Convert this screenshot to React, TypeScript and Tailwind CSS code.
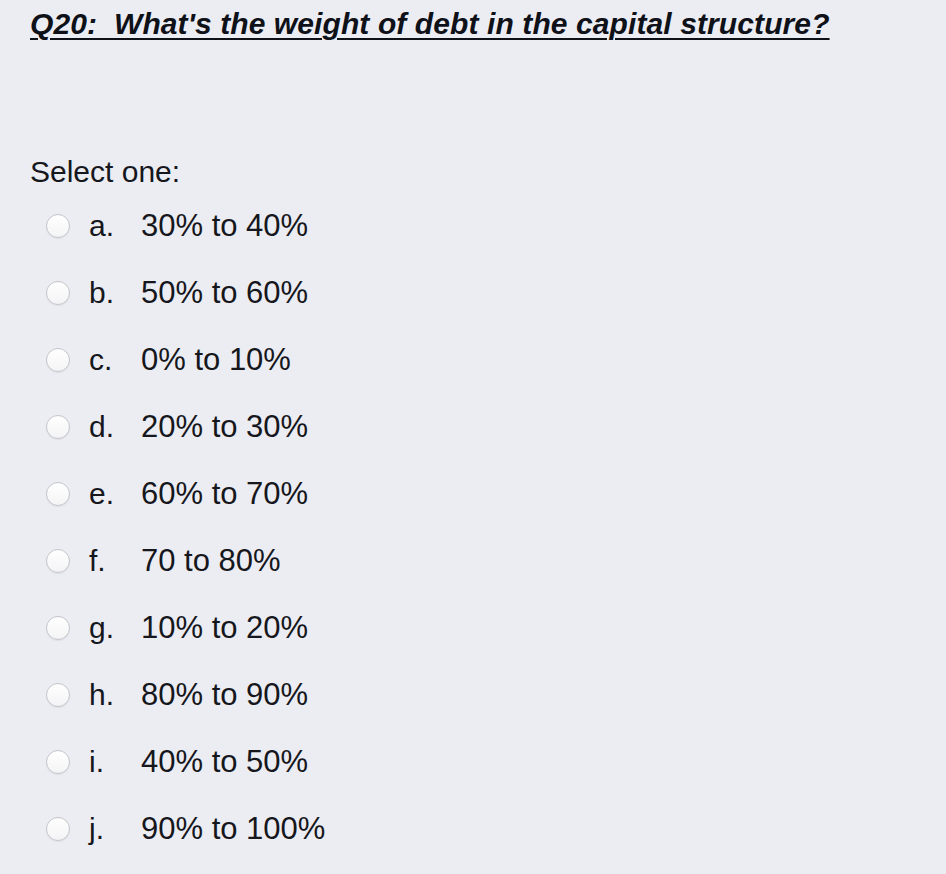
import React from "react";

const options: [string, string][] = [
  ["a.", "30% to 40%"],
  ["b.", "50% to 60%"],
  ["c.", "0% to 10%"],
  ["d.", "20% to 30%"],
  ["e.", "60% to 70%"],
  ["f.", "70 to 80%"],
  ["g.", "10% to 20%"],
  ["h.", "80% to 90%"],
  ["i.", "40% to 50%"],
  ["j.", "90% to 100%"],
];

export default function App() {
  return (
    <div
      className="min-h-[874px] w-full bg-[#ecedf3] pl-[30px] text-[#16171c]"
      style={{ fontFamily: '"Liberation Sans", Arial, Helvetica, sans-serif' }}
    >
      <div className="h-[48px] text-[30px] font-bold italic leading-[48px] tracking-[0.1px] underline decoration-[2px] underline-offset-[4px] text-[#0f1119]">
        Q20:&nbsp; What's the weight of debt in the capital structure?
      </div>
      <div className="mt-[104px] h-[40px] text-[30px] leading-[40px]">Select one:</div>
      <div className="flex flex-col">
        {options.map(([letter, text]) => (
          <label key={letter} className="flex h-[67px] items-center pl-[16px]">
            <span className="block h-[24px] w-[24px] shrink-0 rounded-full border border-[#c4c5ca] bg-gradient-to-b from-[#ffffff] to-[#f4f4f6] shadow-[0_1px_1px_rgba(0,0,0,0.06)]" />
            <span className="ml-[19px] w-[52px] text-[30px] leading-[40px]">{letter}</span>
            <span className="text-[31px] leading-[40px]">{text}</span>
          </label>
        ))}
      </div>
    </div>
  );
}
